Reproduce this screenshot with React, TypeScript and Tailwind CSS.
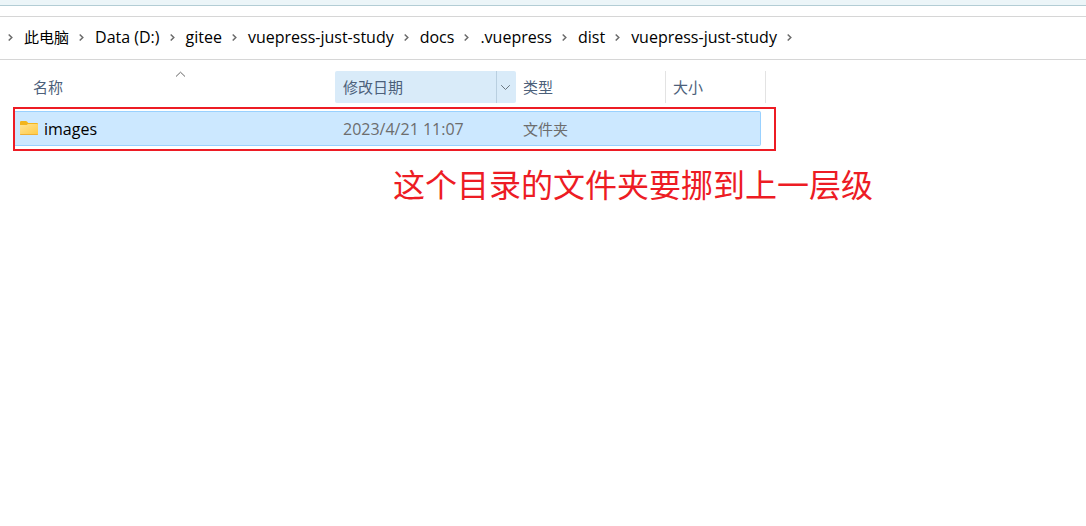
import React from "react";

const trail = [
  "此电脑",
  "Data (D:)",
  "gitee",
  "vuepress-just-study",
  "docs",
  ".vuepress",
  "dist",
  "vuepress-just-study",
];

function Separator() {
  return (
    <svg aria-hidden="true" className="h-[9px] w-[7px] shrink-0" viewBox="0 0 7 9" fill="none">
      <path d="M1.7 1.5 4.8 4.5 1.7 7.5" stroke="#6b6b6b" strokeWidth="1.5" />
    </svg>
  );
}

function FolderIcon() {
  return (
    <svg aria-hidden="true" className="h-4 w-[18px] shrink-0" viewBox="0 0 18 16">
      <defs>
        <linearGradient id="folder-front" x1="0" y1="0" x2="1" y2="1">
          <stop offset="0" stopColor="#ffe394" />
          <stop offset="1" stopColor="#ffca42" />
        </linearGradient>
      </defs>
      <path d="M0 1.2Q0 0 1.2 0H5.8Q6.5 0 7 0.6L8.2 2H17Q18 2 18 3V8H0Z" fill="#f3b51c" />
      <path d="M0 4H6.2Q6.8 4 7.3 3.5L8 3H17.2Q18 3 18 3.8V13Q18 14 17 14H1Q0 14 0 13Z" fill="url(#folder-front)" />
      <path d="M0.2 13.5H17.8" stroke="#eeb035" strokeWidth="1" />
    </svg>
  );
}

export default function App() {
  return (
    <div className="min-h-screen bg-white font-['Open_Sans','Noto_Sans_CJK_SC',sans-serif] text-[15px] leading-5 text-black">
      <div className="h-1.5 border-b border-[#b3cdd5] bg-[#ecf5f8]" />
      <nav aria-label="路径" className="mt-2.5 flex h-11 items-center border-y border-[#d6d6d6] pb-0.5 pl-[7px]">
        <Separator />
        {trail.map((name, i) => (
          <React.Fragment key={i}>
            <a href="#" className="ml-2.5 mr-[9px] whitespace-nowrap text-base leading-5 first-of-type:text-[15px]">
              {name}
            </a>
            <Separator />
          </React.Fragment>
        ))}
      </nav>

      <main className="pt-[11px]">
        <table className="ml-[15px] table-fixed border-separate border-spacing-0 text-left">
          <colgroup>
            <col className="w-80" />
            <col className="w-[181px]" />
            <col className="w-[150px]" />
            <col className="w-[100px]" />
          </colgroup>
          <thead className="text-[#4c607a]">
            <tr>
              <th className="relative p-0 pb-2 font-normal">
                <button type="button" className="flex h-8 w-full items-center pl-[18px]">
                  名称
                </button>
                <svg aria-hidden="true" className="absolute left-40 top-0 h-[7px] w-[11px]" viewBox="0 0 11 7" fill="none">
                  <path d="M1 5.5 5.5 1.2 10 5.5" stroke="#666" />
                </svg>
              </th>
              <th className="p-0 pb-2 font-normal">
                <div className="flex h-8 rounded-xs bg-[#d9ebf9]">
                  <button type="button" className="flex-1 pl-2 text-left">
                    修改日期
                  </button>
                  <button type="button" aria-label="筛选" className="flex w-5 items-center justify-center border-l border-[#b9cfe0] pr-0.5">
                    <svg aria-hidden="true" className="h-[7px] w-[11px] shrink-0" viewBox="0 0 11 7" fill="none">
                      <path d="M1.2 1.2 5.5 5.5 9.8 1.2" stroke="#6a7680" />
                    </svg>
                  </button>
                </div>
              </th>
              <th className="p-0 pb-2 font-normal">
                <button type="button" className="h-8 w-full border-r border-[#e3e3e3] pl-[7px] text-left">
                  类型
                </button>
              </th>
              <th className="p-0 pb-2 font-normal">
                <button type="button" className="h-8 w-full border-r border-[#e3e3e3] pl-[7px] text-left">
                  大小
                </button>
              </th>
            </tr>
          </thead>
          <tbody>
            <tr className="relative text-[#6d6d6d]">
              <td className="h-[35px] border-y border-[#99d1ff] bg-[#cce8ff] p-0 text-base leading-5 text-black">
                <a href="#" className="flex items-center gap-[6px] pl-[5px]">
                  <FolderIcon />
                  images
                </a>
                <div className="pointer-events-none absolute -bottom-[5px] -left-0.5 -right-2.5 -top-1 border-2 border-[#ed1c24]" />
              </td>
              <td className="border-y border-[#99d1ff] bg-[#cce8ff] p-0 pl-2 text-base leading-5">2023/4/21 11:07</td>
              <td className="border-y border-[#99d1ff] bg-[#cce8ff] p-0 pl-[7px]">文件夹</td>
              <td className="p-0">
                <div className="mr-[5px] h-[35px] rounded-r-xs border-y border-r border-[#99d1ff] bg-[#cce8ff]" />
              </td>
            </tr>
          </tbody>
        </table>
        <p className="ml-[393px] mt-[15px] text-[32px] leading-12 text-[#ed1c24]">这个目录的文件夹要挪到上一层级</p>
      </main>
    </div>
  );
}
